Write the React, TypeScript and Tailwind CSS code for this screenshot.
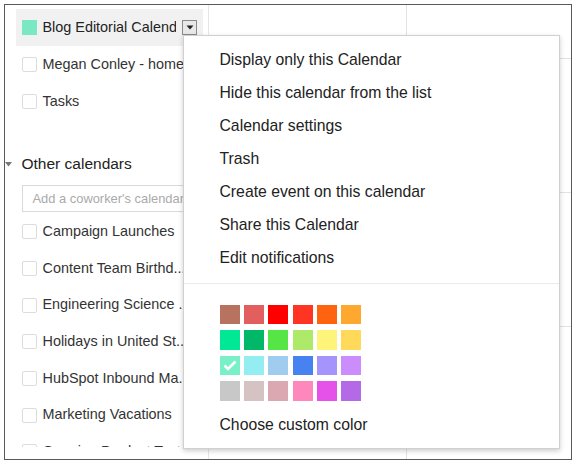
import React from "react";

const font = { fontFamily: '"Liberation Sans", Arial, Helvetica, sans-serif' };

const otherCalendars = [
  "Campaign Launches",
  "Content Team Birthd...",
  "Engineering Science ...",
  "Holidays in United St...",
  "HubSpot Inbound Ma...",
  "Marketing Vacations",
  "Ongoing Product Tests",
];

const menuItems = [
  "Display only this Calendar",
  "Hide this calendar from the list",
  "Calendar settings",
  "Trash",
  "Create event on this calendar",
  "Share this Calendar",
  "Edit notifications",
];

const swatches = [
  "#b87260", "#e35f5f", "#ff0000", "#ff3422", "#ff6310", "#ffa830",
  "#00e895", "#00b868", "#55e545", "#aeea6a", "#fff47a", "#ffd95a",
  "#7af0c8", "#94edf0", "#a0ccf0", "#4682f0", "#a594fb", "#cb8cfc",
  "#c8c8c8", "#d5c3c4", "#dba7b0", "#fe88bb", "#e552ea", "#b46ae6",
];

function Checkbox() {
  return <span className="w-[15px] h-[15px] shrink-0 border border-[#dcdcdc] rounded-[2px] bg-white" />;
}

function CalendarRow({ label }: { label: string }) {
  return (
    <div className="h-[36.7px] flex items-center gap-[6px] pl-[6px]">
      <Checkbox />
      <span className="w-[150px] text-[14.4px] text-[#333] whitespace-nowrap overflow-hidden">{label}</span>
    </div>
  );
}

export default function App() {
  return (
    <div className="w-[577px] h-[465px] bg-white pt-1 pl-1" style={font}>
      <div className="relative w-[568px] h-[456px] border-[1.5px] border-[#5a5a5a] flex overflow-hidden">
        {/* sidebar */}
        <div className="w-[204px] shrink-0 border-r border-[#e6e6e6] h-full">
          <div className="h-[441.5px] overflow-hidden pt-[4px] pl-[10.5px]">
            <div className="h-[37px] mr-[5px] flex items-center bg-[#f1f1f1] pl-[6px] pr-[6px] gap-[6px]">
              <span className="w-[15px] h-[15px] shrink-0 bg-[#7ae8c3]" />
              <span className="text-[14.4px] text-[#222] whitespace-nowrap overflow-hidden w-[137px]">
                Blog Editorial Calendar
              </span>
              <span className="ml-auto w-[15px] h-[15px] border border-[#8a8a8a] bg-[#e8e8e8] flex items-center justify-center">
                <svg width="8" height="5" viewBox="0 0 8 5">
                  <path d="M0.5 0.5 L7.5 0.5 L4 4.5 Z" fill="#222" />
                </svg>
              </span>
            </div>
            <div className="h-[37px] flex items-center gap-[6px] pl-[6px]">
              <Checkbox />
              <span className="text-[14.4px] text-[#333] whitespace-nowrap">Megan Conley - home</span>
            </div>
            <div className="h-[37px] flex items-center gap-[6px] pl-[6px]">
              <Checkbox />
              <span className="text-[14.4px] text-[#333] whitespace-nowrap">Tasks</span>
            </div>

            <div className="mt-[34px] flex items-center h-[20px] -ml-[11px]">
              <svg width="7" height="5" viewBox="0 0 7 5" className="mr-[10px] shrink-0">
                <path d="M0 0 L7 0 L3.5 4.5 Z" fill="#777" />
              </svg>
              <span className="text-[15.5px] text-[#222] whitespace-nowrap">Other calendars</span>
            </div>

            <div className="mt-[11px] ml-[6px] h-[27px] border border-[#d9d9d9] flex items-center pl-[10px] w-[190px] overflow-hidden">
              <span className="text-[12.9px] text-[#aaa] whitespace-nowrap">Add a coworker's calendar</span>
            </div>

            <div className="mt-[1.5px]">
              {otherCalendars.map((c) => (
                <CalendarRow key={c} label={c} />
              ))}
            </div>
          </div>
        </div>

        {/* calendar grid */}
        <div className="flex-1 grid grid-cols-[198px_1fr] grid-rows-[54px_134px_134px_1fr]">
          {Array.from({ length: 8 }).map((_, i) => (
            <div
              key={i}
              className={`border-[#e2e2e2] ${i % 2 === 0 ? "border-r" : ""} ${i < 6 ? "border-b" : ""}`}
            />
          ))}
        </div>

        {/* dropdown menu */}
        <div className="absolute left-[177.5px] top-[29.5px] w-[377px] h-[414px] bg-white border border-[#d0d0d0] shadow-[0_2px_5px_rgba(0,0,0,0.2)] text-[#222]">
          <div className="pt-[8px]">
            {menuItems.map((m) => (
              <div key={m} className="h-[33px] flex items-center pl-[36px] text-[15.75px] whitespace-nowrap">
                {m}
              </div>
            ))}
          </div>
          <div className="mt-[8px] border-t border-[#ebebeb]" />
          <div className="pl-[36px] pt-[21px]">
            <div className="grid grid-cols-[repeat(6,20px)] gap-x-[4.4px] gap-y-[6px]">
              {swatches.map((c, i) => (
                <div
                  key={i}
                  className="w-5 h-[19.5px] flex items-center justify-center"
                  style={{ backgroundColor: c }}
                >
                  {i === 12 && (
                    <svg width="14" height="11" viewBox="0 0 14 11">
                      <path d="M1.5 5.5 L5 9 L12.5 1.5" stroke="#fff" strokeWidth="2.6" fill="none" />
                    </svg>
                  )}
                </div>
              ))}
            </div>
            <div className="mt-[14px] h-[20px] flex items-center text-[15.75px] whitespace-nowrap">
              Choose custom color
            </div>
          </div>
        </div>
      </div>
    </div>
  );
}
